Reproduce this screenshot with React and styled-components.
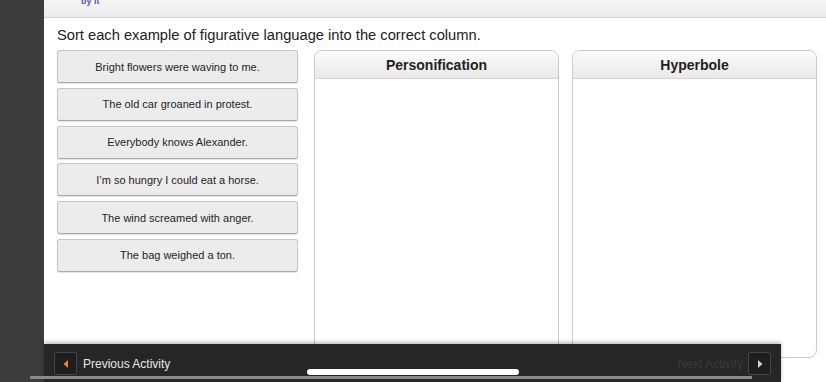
import React from "react";
import styled, { createGlobalStyle } from "styled-components";

const Global = createGlobalStyle`
  html, body { margin: 0; padding: 0; background: #ffffff; }
  body { font-family: "Liberation Sans", Arial, Helvetica, sans-serif; }
  * { box-sizing: border-box; }
`;

const Screen = styled.div`
  position: relative;
  width: 826px;
  height: 382px;
  overflow: hidden;
  display: flex;
  background: #ffffff;
`;

const Sidebar = styled.div`
  width: 44px;
  flex: none;
  background: #3c3c3c;
`;

const Main = styled.div`
  flex: 1;
  display: flex;
  flex-direction: column;
  min-width: 0;
`;

const TopBar = styled.div`
  height: 18px;
  flex: none;
  background: linear-gradient(#f5f5f5, #ebebeb);
  border-bottom: 1px solid #d2d2d2;
  padding-left: 37px;
  overflow: hidden;
`;

const Byline = styled.div`
  margin-top: -5px;
  font-size: 9px;
  font-weight: bold;
  color: #5a5a9a;
  line-height: 12px;
`;

const Content = styled.div`
  padding: 8px 10px 0 13px;
  display: flex;
  flex-direction: column;
`;

const Title = styled.div`
  font-size: 14.7px;
  line-height: 18px;
  color: #222222;
  margin-bottom: 6px;
`;

const Workspace = styled.div`
  display: flex;
  align-items: flex-start;
  gap: 16px;
`;

const Bank = styled.div`
  width: 241px;
  flex: none;
  display: flex;
  flex-direction: column;
  gap: 4.8px;
`;

const Card = styled.div`
  height: 33px;
  display: flex;
  align-items: center;
  justify-content: center;
  background: #ececec;
  border: 1px solid #c6c6c6;
  border-bottom-color: #a9a9a9;
  border-radius: 3px;
  box-shadow: 0 1px 1px rgba(0, 0, 0, 0.12);
  font-size: 11px;
  color: #1e1e1e;
`;

const Columns = styled.div`
  display: flex;
  gap: 13px;
`;

const Column = styled.div`
  width: 245px;
  height: 308px;
  border: 1px solid #cacaca;
  border-radius: 8px;
  overflow: hidden;
  background: #ffffff;
  display: flex;
  flex-direction: column;
`;

const ColumnHead = styled.div`
  height: 28px;
  flex: none;
  display: flex;
  align-items: center;
  justify-content: center;
  background: linear-gradient(#fbfbfb, #e9e9e9);
  border-bottom: 1px solid #d4d4d4;
  font-size: 14px;
  font-weight: bold;
  color: #222222;
`;

const BottomBar = styled.div`
  position: absolute;
  left: 44px;
  top: 344px;
  width: 737px;
  height: 38px;
  background: #262626;
  box-shadow: 0 -2px 4px rgba(0, 0, 0, 0.25);
  display: flex;
  align-items: flex-start;
  justify-content: space-between;
  padding: 8px 10px 0 10px;
`;

const NavGroup = styled.div`
  display: flex;
  align-items: center;
  gap: 5px;
`;

const NavButton = styled.div`
  width: 23px;
  height: 23px;
  border: 1px solid #464646;
  border-radius: 2px;
  background: #1e1e1e;
  display: flex;
  align-items: center;
  justify-content: center;
`;

const NavLabel = styled.span`
  font-size: 12px;
  color: ${(p) => (p.$dim ? "#3c3c3c" : "#e8e8e8")};
  margin-left: ${(p) => (p.$dim ? "0" : "1px")};
`;

const ScrollPill = styled.div`
  position: absolute;
  left: 307px;
  top: 369px;
  width: 212px;
  height: 6px;
  border-radius: 3px;
  background: #ffffff;
`;

const ScrollLine = styled.div`
  position: absolute;
  left: 30px;
  top: 376px;
  width: 722px;
  height: 3px;
  background: #8a8a8a;
`;

const cards = [
  "Bright flowers were waving to me.",
  "The old car groaned in protest.",
  "Everybody knows Alexander.",
  "I’m so hungry I could eat a horse.",
  "The wind screamed with anger.",
  "The bag weighed a ton.",
];

export default function App() {
  return (
    <>
      <Global />
      <Screen>
        <Sidebar />
        <Main>
          <TopBar>
            <Byline>by it</Byline>
          </TopBar>
          <Content>
            <Title>Sort each example of figurative language into the correct column.</Title>
            <Workspace>
              <Bank>
                {cards.map((c) => (
                  <Card key={c}>{c}</Card>
                ))}
              </Bank>
              <Columns>
                <Column>
                  <ColumnHead>Personification</ColumnHead>
                </Column>
                <Column>
                  <ColumnHead>Hyperbole</ColumnHead>
                </Column>
              </Columns>
            </Workspace>
          </Content>
        </Main>
        <BottomBar>
          <NavGroup>
            <NavButton>
              <svg width="8" height="10" viewBox="0 0 8 10">
                <path d="M6 1 L1.5 5 L6 9 Z" fill="#e8832e" />
              </svg>
            </NavButton>
            <NavLabel>Previous Activity</NavLabel>
          </NavGroup>
          <NavGroup>
            <NavLabel $dim>Next Activity</NavLabel>
            <NavButton>
              <svg width="8" height="10" viewBox="0 0 8 10">
                <path d="M2 1 L6.5 5 L2 9 Z" fill="#cfcfcf" />
              </svg>
            </NavButton>
          </NavGroup>
        </BottomBar>
        <ScrollPill />
        <ScrollLine />
      </Screen>
    </>
  );
}
